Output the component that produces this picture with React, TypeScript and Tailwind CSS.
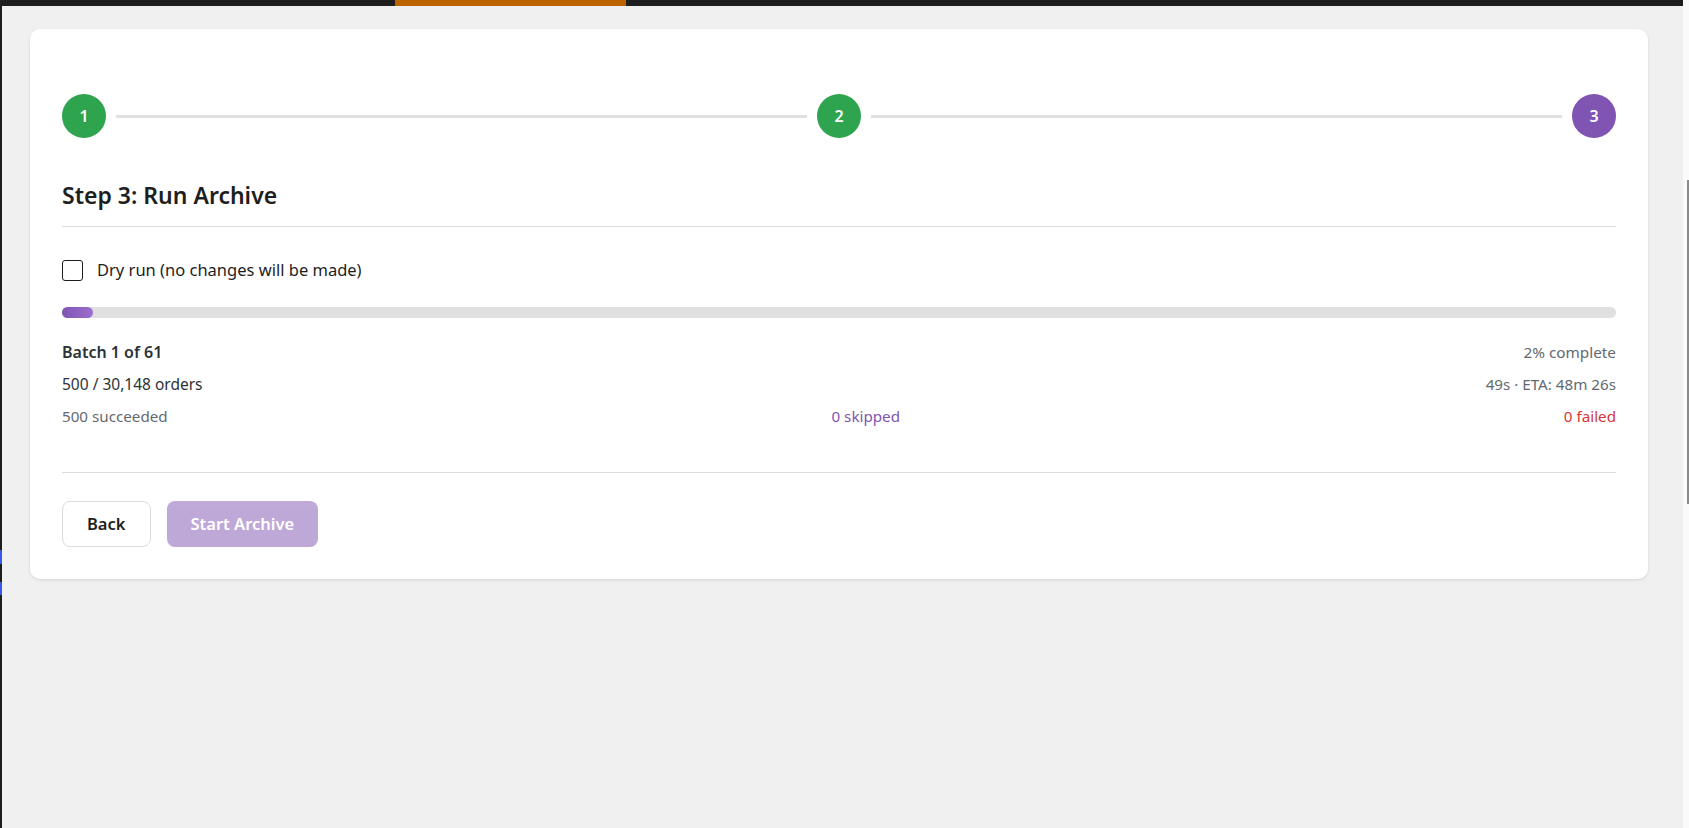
export default function App() {
  const font = { fontFamily: '"Noto Sans", "Open Sans", sans-serif' }

  return (
    <div className="flex h-screen w-full bg-[#f0f0f0] text-[#1e1e1e]" style={font}>
      {/* left window edge */}
      <div className="flex w-[2px] shrink-0 flex-col bg-[#1e1e1e] pt-[550px]">
        <div className="h-[14px] bg-[#3858e9]" />
        <div className="h-[18px]" />
        <div className="h-[13px] bg-[#3858e9]" />
      </div>

      <div className="flex min-w-0 flex-1 flex-col">
        {/* top admin bar */}
        <div className="flex h-[6px] shrink-0 bg-[#1e1e1e]">
          <div className="w-[393px]" />
          <div className="w-[231px] bg-[#bc6300]" />
        </div>

        <div className="pl-[28px] pt-[23px]">
          <div className="w-[1618px] rounded-[10px] bg-white px-8 pb-8 pt-[65px] shadow-[0_1px_3px_rgba(0,0,0,0.12)]">
            {/* stepper */}
            <div className="flex items-center">
              <div className="flex h-11 w-11 shrink-0 items-center justify-center rounded-full bg-[#2ea44f] text-[16px] font-semibold text-white">1</div>
              <div className="mx-[10px] h-[3px] flex-1 bg-[#e0e0e0]" />
              <div className="flex h-11 w-11 shrink-0 items-center justify-center rounded-full bg-[#2ea44f] text-[16px] font-semibold text-white">2</div>
              <div className="mx-[10px] h-[3px] flex-1 bg-[#e0e0e0]" />
              <div className="flex h-11 w-11 shrink-0 items-center justify-center rounded-full bg-[#7f54b3] text-[16px] font-semibold text-white">3</div>
            </div>

            <h2 className="mt-[43px] border-b border-[#dcdcde] pb-[17px] text-[23px] font-semibold leading-[28px]">Step 3: Run Archive</h2>

            <label className="mt-[31px] flex items-center gap-[14px] text-[16.5px] leading-6">
              <span className="h-[21px] w-[21px] rounded-[3px] border-[1.5px] border-[#1e1e1e]" />
              Dry run (no changes will be made)
            </label>

            {/* progress */}
            <div className="mt-[25px] h-[11px] rounded-full bg-[#e0e0e0]">
              <div className="h-full rounded-full bg-gradient-to-r from-[#7f54b3] to-[#9d6fcf]" style={{ width: '2%' }} />
            </div>

            <div className="mt-[23px] flex items-center justify-between leading-[22px]">
              <span className="text-[16px] font-semibold text-[#2c3338]">Batch 1 of 61</span>
              <span className="text-[15.3px] text-[#646970]">2% complete</span>
            </div>
            <div className="mt-[10px] flex items-center justify-between leading-[22px]">
              <span className="text-[15.5px] text-[#2c3338]">500 / 30,148 orders</span>
              <span className="text-[15.2px] text-[#646970]">49s · ETA: 48m 26s</span>
            </div>
            <div className="mt-[10px] flex items-center justify-between text-[15.2px] leading-[22px]">
              <span className="text-[#646970]">500 succeeded</span>
              <span className="text-[#7f54b3]">0 skipped</span>
              <span className="text-[#d63638]">0 failed</span>
            </div>

            <div className="mt-[45px] flex gap-4 border-t border-[#dcdcde] pt-[28px]">
              <button className="h-[46px] rounded-lg border border-[#dcdcde] bg-white px-6 text-[16.5px] font-semibold text-[#1e1e1e]">Back</button>
              <button disabled className="h-[46px] rounded-lg bg-[#7f54b3] px-6 text-[16.5px] font-semibold text-white opacity-50">Start Archive</button>
            </div>
          </div>
        </div>
      </div>

      {/* scrollbar */}
      <div className="flex w-[6px] shrink-0 flex-col items-end bg-[#fafafa] pt-[180px]">
        <div className="h-[324px] w-[2px] bg-[#8a8a8a]" />
      </div>
    </div>
  )
}
